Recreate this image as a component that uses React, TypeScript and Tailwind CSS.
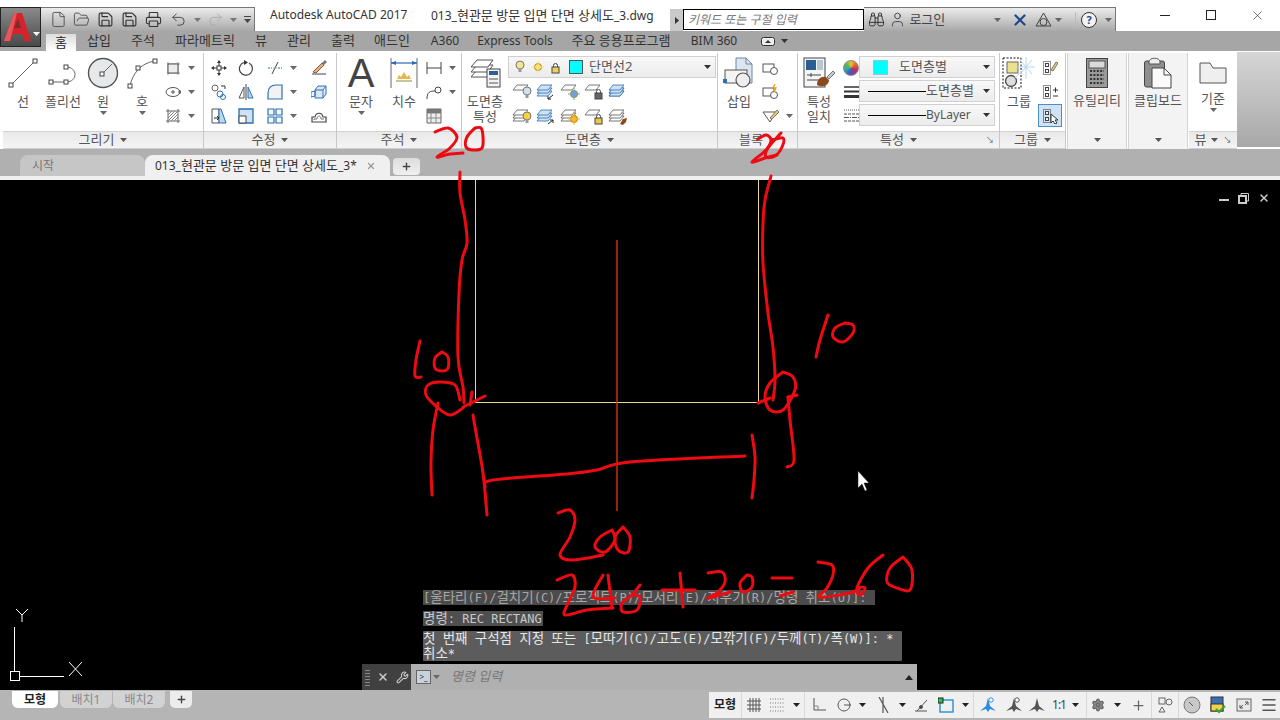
import React from "react";
import { Binoculars, File, FolderOpen, Menu, Plus, Printer, Redo2, Save, Settings, Undo2, User, Wrench, X } from "lucide-react";

type P = { children?: React.ReactNode; w?: number; h?: number };

// tiny svg wrapper for all the cad icons
const S = ({ children, w = 16, h = 16 }: P) => (
  <svg width={w} height={h} viewBox={`0 0 ${w} ${h}`} fill="none" stroke="#555" strokeWidth="1" className="shrink-0">
    {children}
  </svg>
);

const Caret = ({ color = "#444" }: { color?: string }) => (
  <svg width="7" height="4" viewBox="0 0 7 4" className="shrink-0">
    <path d="M0 0h7L3.5 4z" fill={color} />
  </svg>
);

const Grip = ({ x, y }: { x: number; y: number }) => <rect x={x - 2} y={y - 2} width="4" height="4" fill="#fff" stroke="#444" />;

const LineIco = () => (
  <S w={32} h={32}>
    <path d="M4 28 28 4" stroke="#666" /><Grip x={4} y={28} /><Grip x={28} y={4} />
  </S>
);
const PolyIco = () => (
  <S w={32} h={32}>
    <path d="M4 25h15c12 0 12-15 0-15" stroke="#666" /><Grip x={4} y={25} /><Grip x={19} y={25} /><Grip x={19} y={10} />
  </S>
);
const CircleIco = () => (
  <S w={32} h={32}>
    <circle cx="16" cy="16" r="14.5" fill="#e6e8ea" stroke="#555" strokeWidth="1.4" /><path d="M16 16 25 7" stroke="#666" /><Grip x={15} y={17} />
  </S>
);
const ArcIco = () => (
  <S w={32} h={32}>
    <path d="M4 29C6 18 14 6 29 4" stroke="#666" /><Grip x={4} y={29} /><Grip x={12} y={11} /><Grip x={29} y={4} />
  </S>
);
const RectIco = () => (
  <S><path d="M2 4h13M2 13h13M3 2v13M13 2v13" stroke="#999" /><rect x="3" y="4" width="10" height="9" fill="#eee" stroke="#555" /></S>
);
const EllipseIco = () => (
  <S><ellipse cx="8" cy="8" rx="7" ry="4.5" stroke="#555" /><path d="M6 8h4M8 6v4" /><rect x="14" y="7" width="2" height="2" /></S>
);
const HatchIco = () => (
  <S>
    <path d="M1 3h14M1 13h14M3 1v14M13 1v14" stroke="#666" />
    <path d="M3 7l4-4M3 10l7-7M3 13l10-10M6 13l7-7M9 13l4-4" stroke="#888" />
  </S>
);
const MoveIco = () => (
  <S><path d="M8 2v12M2 8h12" stroke="#333" /><path d="M8 0 6 3h4zM8 16l-2-3h4zM0 8l3-2v4zM16 8l-3-2v4z" fill="#333" stroke="none" /><rect x="6" y="6" width="4" height="4" fill="#fff" stroke="#333" /></S>
);
const RotateIco = () => (
  <S><path d="M6 2.5a6.5 6.5 0 1 0 5 .5" stroke="#444" strokeWidth="1.2" /><path d="M6 0v5l4-2.5z" fill="#333" stroke="none" /></S>
);
const TrimIco = () => (
  <S><path d="M1 8h4M11 8h4" stroke="#2b6fb5" strokeDasharray="2 1" /><path d="M5 14 11 2" stroke="#444" /><path d="M6 8h4" stroke="#999" /></S>
);
const EraseIco = () => (
  <S><path d="M1 14h14" stroke="#444" /><path d="M2 12 11 3l2 2-8 8z" fill="#d8b48a" stroke="#a0522d" /><path d="M11 3l3-3 2 2-3 3z" fill="#777" stroke="none" /></S>
);
const CopyIco = () => (
  <S><circle cx="4" cy="4" r="3" stroke="#666" /><circle cx="9" cy="10" r="3" stroke="#2b6fb5" /><circle cx="12" cy="13" r="2.5" stroke="#2b6fb5" /><path d="M10 2h4v3" stroke="#333" /></S>
);
const MirrorIco = () => (
  <S><path d="M8 0v16" stroke="#444" /><path d="M6 3v11H1z" stroke="#555" /><path d="M10 3v11h5z" fill="#bcd7ee" stroke="#2b6fb5" /></S>
);
const FilletIco = () => (
  <S><path d="M1 15V9c0-5 3-8 8-8h6v14z" fill="#f2f2f2" stroke="#2b6fb5" strokeWidth="1.2" /></S>
);
const ExplodeIco = () => (
  <S><path d="M4 6h8v8H4zM4 6l3-4h8l-3 4M12 14l3-4V2" stroke="#2b6fb5" fill="#dbe8f4" /><path d="M0 8l4-1v5l-4 1z" stroke="#2b6fb5" /></S>
);
const StretchIco = () => (
  <S><path d="M1 1h7v14H1z" stroke="#555" /><path d="M8 1h2l5 14H8z" fill="#bcd7ee" stroke="#2b6fb5" /><path d="M3 10h5M6 8l2 2-2 2" stroke="#222" /></S>
);
const ScaleIco = () => (
  <S><path d="M1 1h14v14H1z" fill="#cfe2f3" stroke="#2b6fb5" strokeWidth="1.3" /><path d="M1 8h7v7H1z" fill="#fff" stroke="#444" /></S>
);
const ArrayIco = () => (
  <S><path d="M1 1h6v6H1zM9 1h6v6H9zM1 9h6v6H1zM9 9h6v6H9z" stroke="#2b6fb5" strokeWidth="1.2" fill="#f4f8fc" /></S>
);
const OffsetIco = () => (
  <S><path d="M1 14V9h3c1-5 7-5 8 0h3v5z" stroke="#444" strokeWidth="1.2" /><path d="M3 12v-1h3c0-4 4-4 4 0h3" stroke="#777" /></S>
);
const DimIco = () => (
  <svg width="28" height="32" viewBox="0 0 28 32" fill="none" className="shrink-0">
    <path d="M1 1v30M27 1v30" stroke="#666" /><path d="M1 6h26" stroke="#2668b5" strokeWidth="1.2" />
    <path d="M1 6l5-2v4zM27 6l-5-2v4z" fill="#2668b5" />
    <path d="M7 22l2-4 2 2 3-5 3 5 2-2 2 4z" fill="#e8b84a" />
    <path d="M6 24h16" stroke="#c9c4a0" strokeWidth="2" />
  </svg>
);
const LinDimIco = () => (
  <S><path d="M1 2v12M15 2v12M1 8h14" stroke="#444" /></S>
);
const LeaderIco = () => (
  <S><path d="M1 15c0-7 3-8 8-8" stroke="#444" /><circle cx="12" cy="6" r="3" stroke="#444" /></S>
);
const TableIco = () => (
  <S><path d="M1 1h14v14H1z" fill="#eee" stroke="#666" /><path d="M1 5h14M1 10h14M5 5v10M10 5v10" stroke="#888" /><path d="M1 1h14v4H1z" fill="#777" stroke="none" /></S>
);
const Sheet = ({ y, fill = "#fff", c = "#555" }: { y: number; fill?: string; c?: string }) => <path d={`M5 ${y}h11l-4 5H1z`} fill={fill} stroke={c} strokeWidth="0.8" />;
const LayerPropIco = () => (
  <svg width="32" height="30" viewBox="0 0 32 30" fill="none" className="shrink-0">
    <path d="M8 12h16l-5 7H2z" fill="#fff" stroke="#555" /><path d="M8 7h16l-5 7H2z" fill="#fff" stroke="#555" /><path d="M8 2h16l-5 7H2z" fill="#fff" stroke="#555" />
    <rect x="18" y="11" width="13" height="18" fill="#f3f3f3" stroke="#444" /><rect x="20" y="13" width="9" height="4" fill="#2b5f93" /><path d="M20 21h9M20 25h9" stroke="#555" />
  </svg>
);
const LayerIco = ({ accent, blue, lines }: { accent?: React.ReactNode; blue?: boolean; lines?: boolean }) => (
  <S w={20} h={18}>
    {lines && <><Sheet y={8} /><Sheet y={5} /></>}
    {blue && <><Sheet y={8} fill="#cfe2f3" c="#2b6fb5" /><Sheet y={5} fill="#cfe2f3" c="#2b6fb5" /></>}
    <Sheet y={2} fill={blue ? "#cfe2f3" : "#fff"} c={blue ? "#2b6fb5" : "#555"} />
    {accent}
  </S>
);
const Bulb = ({ x, y, c }: { x: number; y: number; c: string }) => (
  <g><circle cx={x} cy={y} r="4" fill={c} stroke="#777" /><rect x={x - 1.5} y={y + 3} width="3" height="4" fill="#999" stroke="none" /></g>
);
const Lock = ({ x, y, c = "#666" }: { x: number; y: number; c?: string }) => (
  <g><rect x={x} y={y + 3} width="7" height="6" fill={c} stroke="#444" /><path d={`M${x + 1.5} ${y + 3}v-1.5a2 2 0 0 1 4 0V${y + 3}`} stroke="#444" /></g>
);
const Sun = ({ x, y, c }: { x: number; y: number; c: string }) => (
  <g><circle cx={x} cy={y} r="3.5" fill={c} stroke="#b8860b" /><path d={`M${x - 6} ${y}h12M${x} ${y - 6}v12`} stroke={c} /></g>
);
const Brush = () => <path d="M12 16l3-5 4-1-1 4-3 3z" fill="#8b4a1c" stroke="none" />;
const InsertIco = () => (
  <svg width="34" height="32" viewBox="0 0 34 32" fill="none" className="shrink-0">
    <path d="M14 1h10l6 6v19H14z" fill="#dde6f0" stroke="#6b86a8" /><path d="M24 1v6h6" stroke="#6b86a8" />
    <rect x="3" y="13" width="22" height="13" fill="#f4f4f4" stroke="#555" /><circle cx="21" cy="23" r="7" fill="#eee" stroke="#555" strokeWidth="1.2" /><path d="M1 22h4v4H1z" fill="#2b6fb5" />
  </svg>
);
const BlockSmall = ({ bolt }: { bolt?: boolean }) => (
  <S w={18} h={16}>
    <rect x="1" y="4" width="11" height="8" stroke="#555" /><circle cx="12" cy="11" r="3.5" fill="#fff" stroke="#555" />
    {bolt && <path d="M13 0l-2 4h3l-2 4" stroke="#e0a020" strokeWidth="1.3" />}
  </S>
);
const BlockEdit = () => (
  <S w={18} h={16}><path d="M1 4h13L8 14z" fill="#fff" stroke="#555" /><path d="M8 10l7-8 2 2-7 7z" fill="#e7c95e" stroke="#777" /></S>
);
const MatchIco = () => (
  <svg width="32" height="32" viewBox="0 0 32 32" fill="none" className="shrink-0">
    <rect x="1" y="1" width="21" height="29" fill="#f6f6f6" stroke="#444" /><rect x="3" y="3" width="10" height="10" fill="#2b5f93" /><rect x="14" y="3" width="6" height="10" fill="#b5c6d8" />
    <path d="M4 18h14M4 23h14M8 16v4" stroke="#444" /><path d="M14 28c0-6 4-9 9-8l3 3c0 5-6 8-12 5z" fill="#8b4a1c" /><path d="M24 20l6-6 2 2-6 6z" fill="#c9c9c9" stroke="#777" />
  </svg>
);
const Wheel = () => <div className="w-[16px] h-[16px] rounded-full border border-[#888] bg-[conic-gradient(#e8c23a,#e36a2e,#c8324b,#7a3ea8,#3a62c8,#3aa8a8,#5ab84a,#e8c23a)]" />;
const WeightIco = () => (
  <S><path d="M1 3h15" stroke="#333" strokeWidth="1.5" /><path d="M1 7.5h15" stroke="#333" strokeWidth="2" /><path d="M1 12.5h15" stroke="#333" strokeWidth="3" /></S>
);
const TypeIco = () => (
  <S><path d="M1 2h15" stroke="#555" strokeDasharray="1 1" /><path d="M1 6h15M1 13h15" stroke="#555" strokeDasharray="3 1" /><path d="M1 9.5h15" stroke="#555" strokeDasharray="5 1 1 1" /></S>
);
const GroupIco = () => (
  <svg width="34" height="32" viewBox="0 0 34 32" fill="none" className="shrink-0">
    <rect x="1" y="1" width="18" height="30" stroke="#111" strokeDasharray="2 1.5" />
    <rect x="5" y="5" width="11" height="11" fill="#ece28e" stroke="#666" /><circle cx="9" cy="24" r="5.5" fill="#ddd" stroke="#444" strokeWidth="1.3" />
    <path d="M12 22 26 8M24 0v22M14 10h19M18 3l12 14M30 3 18 17" stroke="#b8d8ee" />
  </svg>
);
const GroupSmall = ({ accent }: { accent?: React.ReactNode }) => (
  <S>
    <rect x="1.500" y="1.500" width="7" height="13" stroke="#222" strokeDasharray="1 1" />
    <rect x="3.500" y="3.500" width="3" height="3" fill="#f4f4f4" stroke="#444" /><rect x="3.500" y="9.500" width="3" height="3" fill="#f4f4f4" stroke="#444" />
    {accent}
  </S>
);
const CalcIco = () => (
  <svg width="22" height="30" viewBox="0 0 22 30" fill="none" className="shrink-0">
    <rect x="0.5" y="0.5" width="21" height="29" fill="#9a9a9a" stroke="#444" /><rect x="3" y="3" width="16" height="7" fill="#dadada" stroke="#555" />
    <path d="M4 13h14M4 17h14M4 21h14M4 25h14" stroke="#333" strokeWidth="2" strokeDasharray="2 1.4" />
  </svg>
);
const ClipIco = () => (
  <svg width="28" height="32" viewBox="0 0 28 32" fill="none" className="shrink-0">
    <rect x="0.5" y="4" width="20" height="26" rx="2" fill="#8f8f8f" stroke="#444" /><path d="M5 5c0-5 11-5 11 0v2H5z" fill="#eee" stroke="#555" />
    <path d="M8 11h12l7 7v13H8z" fill="#fafafa" stroke="#444" /><path d="M20 11v7h7" stroke="#444" />
  </svg>
);
const FolderIco = () => (
  <svg width="28" height="22" viewBox="0 0 28 22" fill="none" className="shrink-0">
    <path d="M1 1h10l3 5h13v15H1z" fill="#efefef" stroke="#555" />
  </svg>
);

const Large = ({ w, label, icon, caret }: { w: number; label: string[]; icon: React.ReactNode; caret?: boolean }) => (
  <div className="flex flex-col items-center pt-[4px] shrink-0" style={{ width: w }}>
    <div className="h-[32px] flex items-center justify-center">{icon}</div>
    <div className="mt-[5px] text-[13px] leading-[15px] text-[#555] text-center whitespace-nowrap">
      {label.map((l) => (
        <div key={l}>{l}</div>
      ))}
    </div>
    {caret && <div className="mt-[2px]"><Caret color="#666" /></div>}
  </div>
);

const Small = ({ icon, caret, w }: { icon: React.ReactNode; caret?: boolean; w: number }) => (
  <div className="h-[24px] flex items-center" style={{ width: w }}>
    <div className="w-[22px] flex justify-center shrink-0">{icon}</div>
    {caret && <div className="ml-[4px]"><Caret color="#666" /></div>}
  </div>
);

const Panel = ({ w, title, children, corner }: { w: number; title: string; children: React.ReactNode; corner?: boolean }) => (
  <div className="flex flex-col shrink-0 border-r border-[#c8c8c8]" style={{ width: w }}>
    <div className="h-[78px] flex">{children}</div>
    <div className="h-[18px] bg-gradient-to-b from-[#e9e9e9] to-[#f4f4f4] border-y border-[#d0d0d0] flex items-center justify-center gap-[6px] text-[13px] text-[#555] relative">
      <span>{title}</span>
      <Caret color="#555" />
      {corner && <span className="absolute right-[5px] top-[4px] text-[8px] leading-[8px] text-[#555]">↘</span>}
    </div>
  </div>
);

const Collapsed = ({ w, label, icon }: { w: number; label: string; icon: React.ReactNode }) => (
  <div className="flex flex-col items-center shrink-0 bg-[#f3f3f3] border-x border-[#d4d4d4] ml-[1px]" style={{ width: w }}>
    <div className="h-[32px] mt-[4px] flex items-center">{icon}</div>
    <div className="mt-[3px] text-[13px] leading-[16px] text-[#555] whitespace-nowrap">{label}</div>
    <div className="mt-auto mb-[7px]"><Caret color="#555" /></div>
  </div>
);

const Select = ({ children, w }: { children: React.ReactNode; w: number }) => (
  <div className="h-[22px] mb-[2px] bg-gradient-to-b from-[#f8f8f8] to-[#ececec] border border-[#d0d0d0] flex items-center pr-[4px] text-[13px] text-[#555]" style={{ width: w }}>
    <div className="flex-1 flex items-center min-w-0">{children}</div>
    <Caret color="#333" />
  </div>
);

const ribbonTabs: [string, number, boolean][] = [
  ["삽입", 46, true], ["주석", 42, true], ["파라메트릭", 82, true], ["뷰", 30, true], ["관리", 46, true], ["출력", 42, true], ["애드인", 56, true],
  ["A360", 50, false], ["Express Tools", 90, false], ["주요 응용프로그램", 122, true], ["BIM 360", 64, false],
];

// hand drawn red annotations, page coordinates
const strokes: number[][] = [
  [435,132,448,128,457,137,450,148,437,157,450,154,463,153],
  [475,128,467,137,466,147,473,150,482,148,483,137,481,128,475,128],
  [758,139,766,135,771,140,766,150,752,162,765,158,777,155],
  [781,133,768,148,766,157,775,156,782,147,783,138,772,140],
  [460,172,460,193,465,220,467,243,462,260,459,293,458,357,463,387,464,403],
  [463,407,485,396],[472,392,470,405],
  [460,400,455,385,440,382,428,385,426,395,437,407,450,415,463,408],
  [438,403,433,430,431,463,432,495],
  [420,341,416,360,415,376,421,377],
  [442,352,435,358,435,368,442,371,448,368,448,357,442,352],
  [771,176,765,200,763,223,763,263,768,313,773,347,775,380,773,400],
  [783,372,770,383,765,397,770,410,783,410,795,390,793,377,783,372],
  [758,403,770,398],
  [788,397,797,395],[788,397,790,420,794,460,787,467],
  [828,315,820,340,816,357],
  [845,323,835,328,833,337,843,342,853,333,853,325,845,323],
  [473,415,475,427,483,473,487,515],
  [485,487,493,480,567,474,597,470,630,462,745,456],
  [752,435,755,457,754,480,752,498],
  [558,513,570,510,575,520,570,537,560,555,573,560,603,555],
  [612,530,600,537,595,547,605,552,615,540,612,530],
  [623,527,615,537,618,550,628,552,630,537,623,527],
  [557,580,572,575,575,587,568,603,565,615,587,610,613,608],
  [603,575,593,597,615,598],[608,575,612,608],
  [640,585,632,595,622,603,623,612,637,610,640,597,632,595],
  [662,590,695,590],[680,573,683,607],
  [708,573,722,572,725,582,717,593,708,598,730,592],
  [747,575,740,583,743,592,752,587,752,577,747,575],
  [772,578,792,578],[780,596,793,592],
  [818,562,832,565,833,575,827,588,820,597,850,593,860,588],
  [883,555,868,568,857,588,860,595,865,588,857,587],
  [903,557,890,568,887,582,897,588,910,590,912,570,903,557],
];

// catmull-rom through the points so the loops keep their size
const smooth = (p: number[]) => {
  let d = `M${p[0]} ${p[1]}`;
  const n = p.length / 2;
  const at = (i: number) => {
    const k = Math.max(0, Math.min(n - 1, i));
    return [p[k * 2], p[k * 2 + 1]];
  };
  for (let i = 0; i < n - 1; i++) {
    const [x0, y0] = at(i - 1);
    const [x1, y1] = at(i);
    const [x2, y2] = at(i + 1);
    const [x3, y3] = at(i + 2);
    d += `C${x1 + (x2 - x0) / 6} ${y1 + (y2 - y0) / 6} ${x2 - (x3 - x1) / 6} ${y2 - (y3 - y1) / 6} ${x2} ${y2}`;
  }
  return d;
};

// the command window font has wider hangul than the fallback, so hangul runs get a larger size
const Cmd = ({ t }: { t: string }) => (
  <>
    {t.split(/([가-힣]+)/).map((part, i) =>
      i % 2 ? <span key={i} className="text-[13.5px]">{part}</span> : <span key={i}>{part}</span>,
    )}
  </>
);

const StatusCell = ({ w, children, sep }: { w: number; children: React.ReactNode; sep?: boolean }) => (
  <div className={`h-full flex items-center justify-center shrink-0 ${sep ? "border-r border-[#d8d8d8]" : ""}`} style={{ width: w }}>
    {children}
  </div>
);

const Figure = ({ c, dot }: { c: string; dot?: boolean }) => (
  <S>
    <path d="M8 1l2 8 6 5-6-2-2 3-2-3-6 2 6-5z" fill={c} stroke="none" />
    {dot && <circle cx="11" cy="3" r="2.2" fill="#fff" stroke={c} />}
  </S>
);

export default function App() {
  return (
    <div className="relative w-[1280px] h-[720px] overflow-hidden flex flex-col bg-black font-['Noto_Sans','Noto_Sans_CJK_KR',sans-serif]">
      {/* title row */}
      <div className="h-[31px] bg-white flex shrink-0">
        <div className="w-[41px]" />
        <div className="mt-[7px] w-[214px] h-[24px] bg-gradient-to-b from-[#ececec] to-[#a9a9a9] border-t border-r border-[#777] flex items-center">
          <div className="w-[6px]" />
          <div className="w-[22px] flex justify-center"><File size={17} color="#444" strokeWidth={1.2} /></div>
          <div className="w-[24px] flex justify-center"><FolderOpen size={17} color="#444" strokeWidth={1.2} /></div>
          <div className="w-[25px] flex justify-center"><Save size={17} color="#333" strokeWidth={1.6} /></div>
          <div className="w-[23px] flex justify-center relative"><Save size={17} color="#333" strokeWidth={1.6} /></div>
          <div className="w-[25px] flex justify-center"><Printer size={17} color="#333" strokeWidth={1.5} /></div>
          <div className="w-[24px] flex justify-center"><Undo2 size={17} color="#444" strokeWidth={1.3} /></div>
          <div className="w-[14px] flex justify-center"><Caret color="#777" /></div>
          <div className="w-[22px] flex justify-center"><Redo2 size={17} color="#aaa" strokeWidth={1.3} /></div>
          <div className="w-[14px] flex justify-center"><Caret color="#777" /></div>
          <div className="w-[14px] flex flex-col items-center gap-[2px]"><div className="w-[7px] h-[1px] bg-[#444]" /><Caret /></div>
        </div>
        <div className="ml-[15px] pt-[7px] w-[161px] text-[12px] leading-[16px] text-[#333] whitespace-nowrap">Autodesk AutoCAD 2017</div>
        <div className="pt-[7px] w-[239px] text-[12px] leading-[16px] text-[#333] whitespace-nowrap">013_<span className="text-[13px]">현관문 방문 입면 단면 상세도</span>_3.dwg</div>
        <div className="mt-[9px] w-[13px] h-[22px] bg-[#c9c9c9] flex items-center justify-center">
          <svg width="4" height="7" viewBox="0 0 4 7"><path d="M0 0l4 3.5L0 7z" fill="#333" /></svg>
        </div>
        <div className="mt-[9px] w-[181px] h-[21px] border border-black bg-white pl-[4px] text-[12px] leading-[19px] italic text-[#777]">키워드 또는 구절 입력</div>
        <div className="mt-[7px] w-[252px] h-[24px] bg-gradient-to-b from-[#ececec] to-[#a9a9a9] border-t border-r border-[#777] flex items-center">
          <div className="w-[26px] flex justify-center"><Binoculars size={17} color="#333" strokeWidth={1.4} /></div>
          <div className="w-[20px] flex justify-center"><User size={17} color="#333" strokeWidth={1.2} /></div>
          <div className="w-[92px] pl-[2px] text-[13px] text-[#444]">로그인</div>
          <div className="w-[14px]"><Caret color="#666" /></div>
          <div className="w-[26px] flex justify-center"><X size={18} color="#1f4a8a" strokeWidth={3} /></div>
          <div className="w-[24px] flex justify-center">
            <svg width="17" height="16" viewBox="0 0 17 16" fill="none" stroke="#444"><path d="M8.5 1 16 14H1z" /><circle cx="8.5" cy="10" r="3.5" /></svg>
          </div>
          <div className="w-[22px]"><Caret color="#666" /></div>
          <div className="w-[28px] flex justify-center border-l border-[#bbb]">
            <div className="w-[16px] h-[16px] rounded-full border-[1.5px] border-[#333] bg-[#f2f2f2] flex items-center justify-center text-[11px] leading-[11px] font-bold text-[#1f4a8a]">?</div>
          </div>
          <div className="w-[14px] flex justify-center"><Caret color="#666" /></div>
        </div>
        <div className="flex-1 flex items-start pt-[8px] pl-[26px]">
          <div className="w-[46px] h-[14px] flex items-center justify-center"><div className="w-[10px] h-[1px] bg-[#222]" /></div>
          <div className="w-[46px] h-[14px] flex items-center justify-center"><div className="w-[10px] h-[10px] border border-[#222]" /></div>
          <div className="w-[46px] h-[14px] flex items-center justify-center"><X size={15} color="#222" strokeWidth={1} /></div>
        </div>
      </div>

      {/* ribbon tabs */}
      <div className="h-[20px] bg-[#a6a6a6] flex shrink-0 pl-[46px] text-[#333]">
        <div className="w-[30px] mt-[3px] h-[17px] bg-gradient-to-b from-[#dcdcdc] to-white flex items-center justify-center text-[13px] text-[#222]">홈</div>
        {ribbonTabs.map(([t, w, ko]) => (
          <div key={t} className={`h-full flex items-center justify-center whitespace-nowrap ${ko ? "text-[13px]" : "text-[12px]"}`} style={{ width: w }}>{t}</div>
        ))}
        <div className="ml-[15px] flex items-center gap-[6px]">
          <svg width="14" height="9" viewBox="0 0 14 9"><rect x="0.5" y="0.5" width="13" height="8" rx="2" fill="#eee" stroke="#333" /><path d="M4 6h6L7 3z" fill="#333" /></svg>
          <Caret color="#333" />
        </div>
      </div>

      {/* ribbon */}
      <div className="h-[98px] bg-white flex shrink-0 pl-[3px] pt-[2px]">
        <Panel w={201} title="그리기">
          <Large w={40} label={["선"]} icon={<LineIco />} />
          <Large w={40} label={["폴리선"]} icon={<PolyIco />} />
          <Large w={40} label={["원"]} caret icon={<CircleIco />} />
          <Large w={38} label={["호"]} caret icon={<ArcIco />} />
          <div className="pt-[3px] pl-[1px]">
            <Small w={40} caret icon={<RectIco />} />
            <Small w={40} caret icon={<EllipseIco />} />
            <Small w={40} caret icon={<HatchIco />} />
          </div>
        </Panel>
        <Panel w={133} title="수정">
          <div className="pt-[3px] pl-[4px] grid grid-cols-[27px_29px_44px_30px] grid-rows-[24px_24px_24px]">
            <Small w={27} icon={<MoveIco />} />
            <Small w={29} icon={<RotateIco />} />
            <Small w={44} caret icon={<TrimIco />} />
            <Small w={30} icon={<EraseIco />} />
            <Small w={27} icon={<CopyIco />} />
            <Small w={29} icon={<MirrorIco />} />
            <Small w={44} caret icon={<FilletIco />} />
            <Small w={30} icon={<ExplodeIco />} />
            <Small w={27} icon={<StretchIco />} />
            <Small w={29} icon={<ScaleIco />} />
            <Small w={44} caret icon={<ArrayIco />} />
            <Small w={30} icon={<OffsetIco />} />
          </div>
        </Panel>
        <Panel w={125} title="주석">
          <Large w={48} label={["문자"]} caret icon={<span className="font-['Liberation_Sans',sans-serif] text-[40px] leading-[32px] text-[#444]">A</span>} />
          <Large w={38} label={["치수"]} icon={<DimIco />} />
          <div className="pt-[3px]">
            <Small w={36} caret icon={<LinDimIco />} />
            <Small w={36} caret icon={<LeaderIco />} />
            <Small w={36} icon={<TableIco />} />
          </div>
        </Panel>
        <Panel w={256} title="도면층">
          <Large w={46} label={["도면층", "특성"]} icon={<LayerPropIco />} />
          <div className="pt-[3px] w-[208px]">
            <div className="w-[208px] h-[22px] bg-gradient-to-b from-[#f8f8f8] to-[#ececec] border border-[#d0d0d0] flex items-center pl-[4px] pr-[4px] gap-[2px] text-[13px] text-[#555]">
              <S w={15} h={16}><Bulb x={7} y={6} c="#f5e58a" /></S>
              <S w={17} h={16}><Sun x={8} y={8} c="#f3e27a" /></S>
              <S w={16} h={16}><Lock x={3} y={5} c="#eed060" /></S>
              <div className="w-[14px] h-[14px] bg-[#00ffff] border border-[#555] ml-[2px]" />
              <span className="ml-[4px]">단면선2</span>
              <div className="ml-auto"><Caret color="#333" /></div>
            </div>
            <div className="flex pt-[3px] pl-[2px]">
              {[
                <LayerIco accent={<Bulb x={15} y={8} c="#cfe2f3" />} />,
                <LayerIco blue accent={<path d="M12 16l5-4M12 16h3M12 16v-3" stroke="#222" />} />,
                <LayerIco accent={<Sun x={14} y={11} c="#6ba4d8" />} />,
                <LayerIco accent={<Lock x={11} y={7} />} />,
                <LayerIco blue lines />,
              ].map((ic, i) => (
                <div key={i} className="w-[24px] h-[22px] flex items-center justify-center">{ic}</div>
              ))}
            </div>
            <div className="flex pt-[3px] pl-[2px]">
              {[
                <LayerIco lines accent={<Bulb x={15} y={8} c="#f6d23c" />} />,
                <LayerIco blue accent={<path d="M12 16l5-4M17 12h-3M17 12v3" stroke="#222" />} />,
                <LayerIco lines accent={<Sun x={14} y={11} c="#f5b52e" />} />,
                <LayerIco accent={<Lock x={11} y={7} c="#eec84a" />} />,
                <LayerIco lines accent={<Brush />} />,
              ].map((ic, i) => (
                <div key={i} className="w-[24px] h-[22px] flex items-center justify-center">{ic}</div>
              ))}
            </div>
          </div>
        </Panel>
        <Panel w={80} title="블록">
          <Large w={42} label={["삽입"]} icon={<InsertIco />} />
          <div className="pt-[3px]">
            <Small w={36} icon={<BlockSmall />} />
            <Small w={36} icon={<BlockSmall bolt />} />
            <Small w={36} caret icon={<BlockEdit />} />
          </div>
        </Panel>
        <Panel w={202} title="특성" corner>
          <Large w={42} label={["특성", "일치"]} icon={<MatchIco />} />
          <div className="pt-[3px]">
            <Small w={20} icon={<Wheel />} />
            <Small w={20} icon={<WeightIco />} />
            <Small w={20} icon={<TypeIco />} />
          </div>
          <div className="pt-[3px] ml-[-1px]">
            <Select w={136}>
              <div className="w-[15px] h-[15px] bg-[#00ffff] ml-[13px] border border-[#8cc]" />
              <span className="ml-[11px]">도면층별</span>
            </Select>
            <Select w={136}>
              <div className="w-[58px] h-[1px] bg-black ml-[8px]" />
              <span>도면층별</span>
            </Select>
            <Select w={136}>
              <div className="w-[58px] h-[1px] bg-black ml-[8px]" />
              <span className="text-[12px]">ByLayer</span>
            </Select>
          </div>
        </Panel>
        <Panel w={66} title="그룹">
          <Large w={38} label={["그룹"]} icon={<GroupIco />} />
          <div className="pt-[3px] flex flex-col items-center w-[24px]">
            <div className="h-[24px] flex items-center"><GroupSmall accent={<path d="M9 10l5-8 2 1-5 8z" fill="#e7c95e" stroke="#777" />} /></div>
            <div className="h-[24px] flex items-center"><GroupSmall accent={<path d="M11 6h5M13.5 3.500v5M11 12h5" stroke="#333" />} /></div>
            <div className="h-[23px] w-[24px] bg-[#cfe3f5] border border-[#4a90c8] flex items-center justify-center"><GroupSmall accent={<path d="M9 6v9l2-2 2 3 2-1-2-3h3z" fill="#fff" stroke="#333" />} /></div>
          </div>
        </Panel>
        <Collapsed w={60} label="유틸리티" icon={<CalcIco />} />
        <Collapsed w={60} label="클립보드" icon={<ClipIco />} />
        <div className="w-[48px] ml-[1px] flex flex-col shrink-0">
          <div className="h-[78px] flex flex-col items-center pt-[9px]">
            <FolderIco />
            <div className="mt-[7px] text-[13px] leading-[15px] text-[#555]">기준</div>
            <div className="mt-[2px]"><Caret color="#666" /></div>
          </div>
          <div className="h-[18px] bg-gradient-to-b from-[#e9e9e9] to-[#f4f4f4] border-y border-[#d0d0d0] flex items-center justify-center gap-[5px] text-[13px] text-[#555]">
            <span>뷰</span><Caret color="#555" /><span className="text-[8px] leading-[8px]">↘</span>
          </div>
        </div>
        <div className="flex-1 bg-gradient-to-b from-[#d6d6d6] to-[#a8a8a8] mb-[2px] mt-[-1px]" />
      </div>

      {/* file tabs */}
      <div className="h-[27px] bg-[#b0b0b0] flex items-end shrink-0 pl-[20px] text-[12px]">
        <div className="w-[125px] h-[21px] bg-[#c6c6c6] rounded-t-[8px] pl-[12px] leading-[21px] text-[#777]">시작</div>
        <div className="w-[245px] h-[21px] bg-[#f0f0f0] rounded-t-[8px] pl-[10px] flex items-center text-[#333]">
          <span className="whitespace-nowrap">013_<span className="text-[13px]">현관문 방문 입면 단면 상세도</span>_3*</span>
          <X size={10} color="#999" strokeWidth={3} className="ml-[9px]" />
        </div>
        <div className="ml-[3px] w-[27px] h-[17px] mb-[1px] bg-gradient-to-b from-[#ddd] to-[#f0f0f0] rounded-[4px] flex items-center justify-center">
          <Plus size={11} color="#444" strokeWidth={3} />
        </div>
      </div>
      <div className="h-[4px] bg-[#f0f0f0] shrink-0" />

      {/* drawing area */}
      <div className="relative flex-1 bg-black">
        <svg className="absolute inset-0" width="1280" height="510" viewBox="0 180 1280 510" fill="none">
          <path d="M475.5 180V402.5H758.5V180" stroke="#e8d98a" />
          <path d="M617 240V511" stroke="#d8301a" strokeWidth="1.4" />
          {/* ucs icon */}
          <path d="M14.5 627V671M20 676.5H64" stroke="#fff" />
          <rect x="10.5" y="671.5" width="9" height="9" stroke="#fff" />
          <path d="M69 662 82 676M82 662 69 676M16 609 22 615 28 609M22 615V622" stroke="#fff" />
          {/* cursor */}
          <path d="M858 471V488L862 484 865 491 867 490 864 483H869z" fill="#fff" stroke="#222" strokeWidth="0.5" />
        </svg>
        <div className="absolute right-[10px] top-[12px] flex items-center gap-[9px]">
          <div className="w-[10px] h-[2px] bg-[#ccc] mt-[3px]" />
          <svg width="11" height="11" viewBox="0 0 11 11" fill="none" stroke="#ccc"><path d="M3 2.500V.5h7.500V8H8.500" /><rect x="1" y="3" width="7" height="7" strokeWidth="2" /></svg>
          <X size={12} color="#ccc" strokeWidth={3} />
        </div>
        <div className="absolute left-[362px] bottom-0 w-[555px]">
          <div className="pl-[61px] flex flex-col items-start font-['DejaVu_Sans_Mono','Noto_Sans_CJK_KR',monospace] text-[12px] leading-[15px]">
            <div className="bg-[#4b4b4b] text-[#a8a8a8] whitespace-nowrap w-[452px] h-[15px]"><Cmd t="[울타리(F)/걸치기(C)/프로젝트(P)/모서리(E)/지우기(R)/명령 취소(U)]:" /></div>
            <div className="mt-[6px] bg-[#4f4f4f] text-[#c8c8c8] whitespace-nowrap w-[120px] h-[15px]"><Cmd t="명령: REC RECTANG" /></div>
            <div className="mt-[5px] mb-[3px] bg-[#5c5c5c] text-[#e6e6e6] w-[479px] h-[30px] rounded-[1px]">
              <div className="whitespace-nowrap h-[15px]"><Cmd t="첫 번째 구석점 지정 또는 [모따기(C)/고도(E)/모깎기(F)/두께(T)/폭(W)]: *" /></div>
              <div className="h-[15px]"><Cmd t="취소*" /></div>
            </div>
          </div>
          <div className="h-[26px] flex">
            <div className="w-[49px] bg-[#404040] flex items-center gap-[7px] pl-[3px]">
              <div className="w-[5px] h-[18px] bg-[repeating-linear-gradient(0deg,#888_0,#888_1px,#404040_1px,#404040_3px)]" />
              <X size={12} color="#ccc" strokeWidth={3} />
              <Wrench size={13} color="#ccc" strokeWidth={2} />
            </div>
            <div className="flex-1 bg-[#b0b0b0] flex items-center pl-[5px] pr-[4px]">
              <div className="w-[15px] h-[14px] border border-[#666] bg-[#c8d2dc] text-[8px] leading-[12px] text-[#333] text-center">&gt;_</div>
              <div className="ml-[2px]"><Caret color="#666" /></div>
              <span className="ml-[11px] text-[13px] italic text-[#777]">명령 입력</span>
              <svg className="ml-auto" width="8" height="5" viewBox="0 0 8 5"><path d="M0 5h8L4 0z" fill="#222" /></svg>
            </div>
          </div>
        </div>
      </div>

      {/* bottom bar */}
      <div className="h-[30px] bg-[#b5b5b5] flex shrink-0">
        <div className="flex items-start pl-[12px] text-[12px]">
          <div className="w-[46px] h-[17px] mt-[1px] bg-white rounded-b-[6px] flex items-center justify-center font-bold text-[#222]">모형</div>
          <div className="w-[52px] h-[17px] mt-[1px] ml-[2px] bg-[#d2d2d2] rounded-b-[6px] flex items-center justify-center text-[#888]">배치1</div>
          <div className="w-[52px] h-[17px] mt-[1px] ml-[1px] bg-[#d2d2d2] rounded-b-[6px] flex items-center justify-center text-[#888]">배치2</div>
          <div className="w-[22px] h-[17px] mt-[1px] ml-[5px] bg-[#ececec] rounded-b-[5px] flex items-center justify-center"><Plus size={11} color="#444" strokeWidth={3} /></div>
        </div>
        <div className="ml-auto w-[571px] h-[26px] mt-[2px] bg-[#f0f0f0] flex items-center text-[12px] text-[#222]">
          <StatusCell w={33} sep><span className="font-bold">모형</span></StatusCell>
          <StatusCell w={23}><S><path d="M1 4h14M1 8h14M1 12h14M4 1v14M7 1v14M10 1v14M13 1v14" stroke="#555" /></S></StatusCell>
          <StatusCell w={23}><S><path d="M1 2h14M1 6h14M1 10h14M1 14h14" stroke="#777" strokeDasharray="1 1.5" /></S></StatusCell>
          <StatusCell w={17} sep><Caret color="#222" /></StatusCell>
          <StatusCell w={28}><S><path d="M3 1v12h12" stroke="#555" /><path d="M3 9h4v4" stroke="#888" /></S></StatusCell>
          <StatusCell w={22}><S><circle cx="8" cy="8" r="6" stroke="#555" /><path d="M8 8h7" stroke="#555" /></S></StatusCell>
          <StatusCell w={15}><Caret color="#222" /></StatusCell>
          <StatusCell w={25}><S><path d="M4 0l9 16M8 0v16" stroke="#555" strokeWidth="1.2" /></S></StatusCell>
          <StatusCell w={15}><Caret color="#222" /></StatusCell>
          <StatusCell w={24}><S><path d="M1 14h12M3 14 13 3" stroke="#555" /><circle cx="7" cy="10" r="1.5" fill="#444" /></S></StatusCell>
          <StatusCell w={24}><S><rect x="2" y="3" width="13" height="12" stroke="#2b8ad8" strokeWidth="1.4" /><rect x="0" y="1" width="5" height="5" fill="#33c04a" stroke="#222" /></S></StatusCell>
          <StatusCell w={16} sep><Caret color="#222" /></StatusCell>
          <StatusCell w={27}><Figure c="#2f8ae0" dot /></StatusCell>
          <StatusCell w={25}><Figure c="#555" dot /></StatusCell>
          <StatusCell w={21}><Figure c="#555" /></StatusCell>
          <StatusCell w={24}><span className="tracking-[-1px] text-[#444]">1:1</span></StatusCell>
          <StatusCell w={9}><Caret color="#222" /></StatusCell>
          <StatusCell w={7} sep><span /></StatusCell>
          <StatusCell w={21}><Settings size={14} color="#666" fill="#888" /></StatusCell>
          <StatusCell w={18}><Caret color="#222" /></StatusCell>
          <StatusCell w={26} sep><Plus size={15} color="#666" strokeWidth={2} /></StatusCell>
          <StatusCell w={27} sep><S><rect x="2" y="1" width="6" height="6" stroke="#666" /><circle cx="12" cy="5" r="3" stroke="#666" /><path d="M5 10l-3 5h6z" stroke="#666" /></S></StatusCell>
          <StatusCell w={26}><S w={18} h={18}><circle cx="9" cy="9" r="8" fill="#c8c8c8" stroke="#777" /><path d="M6 6l4 4" stroke="#555" /></S></StatusCell>
          <StatusCell w={26}><S w={18} h={18}><rect x="2" y="1" width="12" height="14" fill="#3c6fb0" stroke="#333" /><rect x="2" y="8" width="12" height="7" fill="#f1d24a" stroke="#333" /><path d="M7 13l3 3 6-6" stroke="#3aa03a" strokeWidth="2" /></S></StatusCell>
          <StatusCell w={26}><S><rect x="1" y="2" width="14" height="12" fill="#e8e8e8" stroke="#666" /><path d="M4 11l3-3M4 11h3M4 11V8M12 5 9 8M12 5H9M12 5v3" stroke="#555" /></S></StatusCell>
          <StatusCell w={23}><Menu size={18} color="#555" strokeWidth={2} /></StatusCell>
        </div>
      </div>

      {/* app button sits across title and tab rows */}
      <div className="absolute left-0 top-[7px] w-[41px] h-[40px] bg-gradient-to-b from-[#8a8a8a] to-[#4a4a4a] border border-[#222] flex items-center">
        <svg width="28" height="32" viewBox="0 0 28 32" className="ml-[3px]">
          <path d="M10 2h8l9 28h-7l-2-7H9l-3 7H0z" fill="#d4232a" />
          <path d="M10 17h7l-3-9z" fill="#7a2a2a" />
          <path d="M0 30 10 2h3L6 30z" fill="#e8555a" />
        </svg>
        <div className="ml-[1px] mt-[14px]"><Caret color="#fff" /></div>
      </div>

      {/* red pen marks over everything */}
      <svg className="absolute inset-0 pointer-events-none" width="1280" height="720" viewBox="0 0 1280 720" fill="none" stroke="#ee0a12" strokeWidth="3" strokeLinecap="round" strokeLinejoin="round">
        {strokes.map((p, i) => (
          <path key={i} d={smooth(p)} />
        ))}
      </svg>
    </div>
  );
}
